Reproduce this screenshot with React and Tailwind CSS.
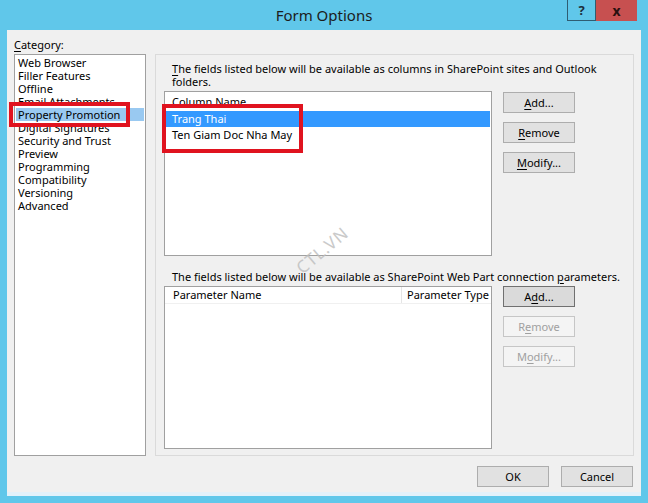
import React from 'react';

const categories = [
  'Web Browser',
  'Filler Features',
  'Offline',
  'Email Attachments',
  'Property Promotion',
  'Digital Signatures',
  'Security and Trust',
  'Preview',
  'Programming',
  'Compatibility',
  'Versioning',
  'Advanced',
];

function Key({ children }) {
  return <span className="underline underline-offset-[2px] decoration-1">{children}</span>;
}

function DlgButton({ children, focused, disabled, className = '' }) {
  let look = 'bg-[#e1e1e1] border-[#adadad] text-black';
  if (focused) look = 'bg-[#dadada] border-[#707070] text-black';
  if (disabled) look = 'bg-[#f4f4f4] border-[#c6c6c6] text-[#a0a0a0]';
  return (
    <div className={`flex h-[21px] w-[72px] items-center justify-center border ${look} ${className}`}>
      <span>{children}</span>
    </div>
  );
}

export default function App() {
  return (
    <div className="relative flex h-[503px] w-[648px] flex-col overflow-hidden bg-[#60c7ea] font-['Noto_Sans',sans-serif] text-[11px] leading-[13px] text-black">
      {/* title bar */}
      <div className="relative flex h-[30px] shrink-0 items-center justify-center">
        <span className="text-[15px] leading-[20px] text-[#1c1c1c]">Form Options</span>
        <div className="absolute right-[11px] top-0 flex">
          <div className="flex h-[21px] w-[29px] items-center justify-center border border-t-0 border-[#2f5d72] text-[13px] font-bold text-[#1c2d3a]">
            ?
          </div>
          <div className="flex h-[21px] w-[41px] items-center justify-center bg-[#c75050] text-[14px] font-bold leading-[14px] text-[#2a1010]">
            x
          </div>
        </div>
      </div>

      {/* dialog body */}
      <div className="mx-[7px] flex h-[466px] flex-col bg-[#f0f0f0]">
        <div className="flex pl-[7px] pt-[8px]">
          {/* category */}
          <div className="flex w-[132px] flex-col">
            <div className="h-[16px] leading-[14px]">
              <Key>C</Key>ategory:
            </div>
            <div className="h-[402px] border border-[#a0a0a0] bg-white pt-[1px]">
              {categories.map((c) => (
                <div
                  key={c}
                  className={`mx-[1px] h-[13px] pl-[2px] leading-[13px] ${
                    c === 'Property Promotion' ? 'bg-[#99c9f1]' : ''
                  }`}
                >
                  {c}
                </div>
              ))}
            </div>
          </div>

          {/* right panel */}
          <div className="ml-[9px] mt-[16px] flex h-[402px] w-[479px] flex-col border border-[#dadada] pl-[8px] pt-[7px]">
            <div className="pl-[8px]">
              <Key>T</Key>he fields listed below will be available as columns in SharePoint sites and Outlook
              <br />
              folders.
            </div>
            <div className="mt-[3px] flex">
              <div className="h-[165px] w-[328px] border border-[#a0a0a0] bg-white">
                <div className="h-[19px] pl-[7px] pt-[3px] leading-[13px]">Column Name</div>
                <div className="mx-[1px] h-[16px] bg-[#3399ff] pl-[6px] leading-[16px] text-white">Trang Thai</div>
                <div className="h-[16px] pl-[7px] leading-[16px]">Ten Giam Doc Nha May</div>
              </div>
              <div className="ml-[11px] mt-[1px] flex flex-col gap-[9px]">
                <DlgButton>
                  <Key>A</Key>dd...
                </DlgButton>
                <DlgButton>
                  <Key>R</Key>emove
                </DlgButton>
                <DlgButton>
                  <Key>M</Key>odify...
                </DlgButton>
              </div>
            </div>

            <div className="mt-[14px] pl-[8px]">
              The fields listed below will be available as SharePoint Web Part connection <Key>p</Key>arameters.
            </div>
            <div className="mt-[3px] flex">
              <div className="flex h-[163px] w-[328px] flex-col border border-[#a0a0a0] bg-white">
                <div className="flex h-[17px] border-b border-[#f0f0f0] leading-[16px]">
                  <div className="w-[237px] border-r border-[#e5e5e5] pl-[8px]">Parameter Name</div>
                  <div className="pl-[5px]">Parameter Type</div>
                </div>
              </div>
              <div className="ml-[11px] flex flex-col gap-[9px]">
                <DlgButton focused>
                  A<Key>d</Key>d...
                </DlgButton>
                <DlgButton disabled>
                  R<Key>e</Key>move
                </DlgButton>
                <DlgButton disabled>
                  M<Key>o</Key>dify...
                </DlgButton>
              </div>
            </div>
          </div>
        </div>

        <div className="mt-[10px] flex justify-end gap-[12px] pr-[8px]">
          <DlgButton>OK</DlgButton>
          <DlgButton>Cancel</DlgButton>
        </div>
        <div className="mt-auto h-[4px] bg-[#e2f1fa]" />
      </div>

      {/* red highlight marks */}
      <div className="absolute left-[9px] top-[102px] h-[25px] w-[121px] border-[4px] border-[#e0131f]" />
      <div className="absolute left-[162px] top-[104px] h-[49px] w-[141px] border-[4px] border-[#e0131f]" />

      {/* watermark */}
      <div className="absolute left-[322px] top-[250px] -translate-x-1/2 -translate-y-1/2 rotate-[-40deg] text-[17px] leading-[17px] tracking-[1px] text-[#bdbdbd] opacity-80">
        CTL.VN
      </div>
    </div>
  );
}
